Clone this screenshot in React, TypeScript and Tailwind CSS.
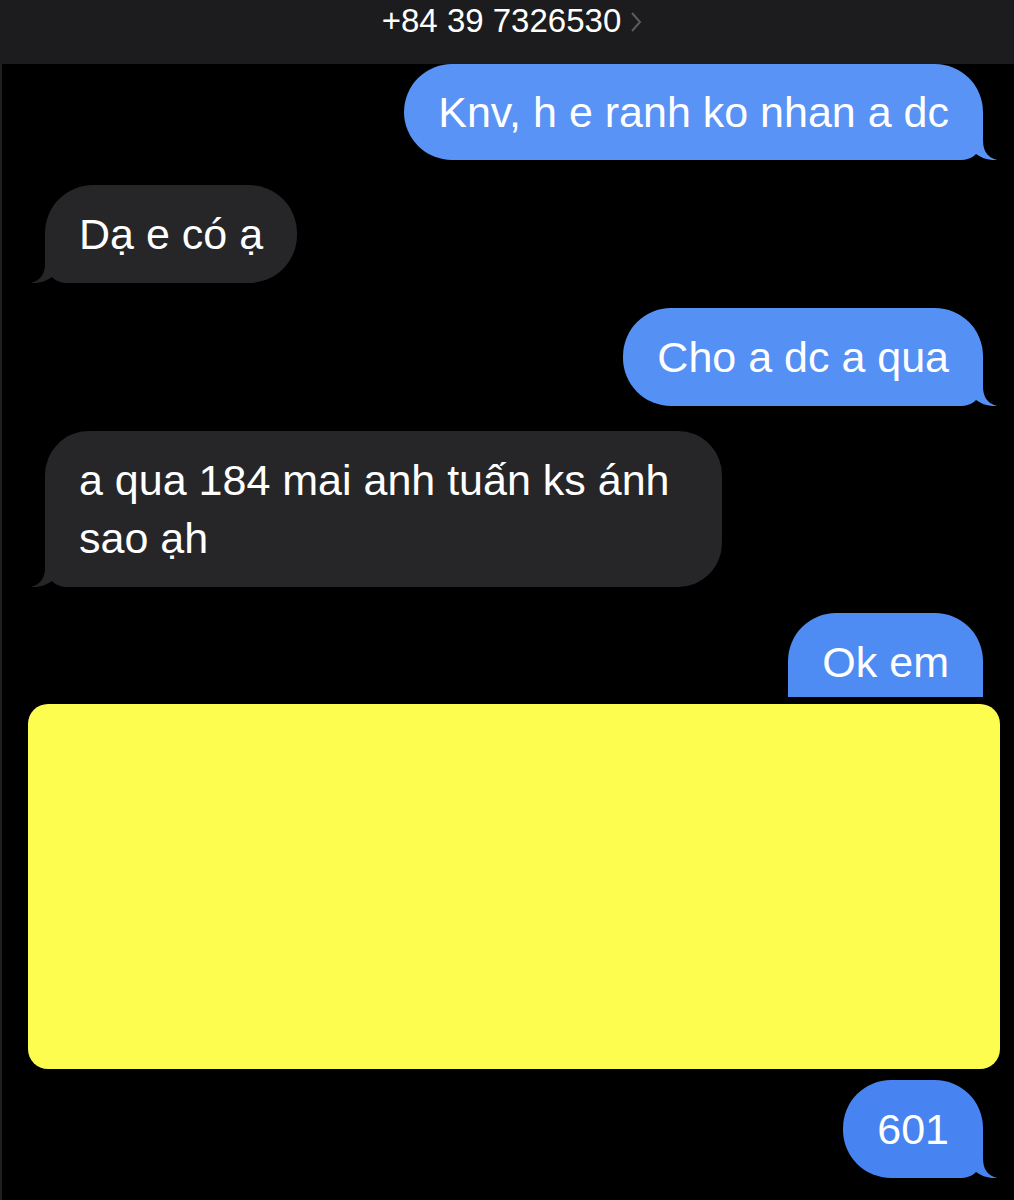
import React from "react";

const FONT = { fontFamily: '"Liberation Sans", Arial, sans-serif' };

function Tail({ color, side }: { color: string; side: "left" | "right" }) {
  return (
    <svg
      width="64"
      height="48"
      viewBox="0 0 64 48"
      className={
        side === "right"
          ? "absolute bottom-0 right-[-16px]"
          : "absolute bottom-0 left-[-16px] -scale-x-100"
      }
    >
      <path
        d="M0 48 L0 0 L48 0 L48 28 C48 39 52 45 62 48 C55 48.6 47 46.5 41 42 C37 46 32 48 24 48 Z"
        fill={color}
      />
    </svg>
  );
}

function Bubble({
  text,
  color,
  side,
  className = "py-[20px] rounded-[48px]",
}: {
  text: React.ReactNode;
  color: string;
  side: "left" | "right";
  className?: string;
}) {
  return (
    <div
      className={`relative px-[34px] text-[43px] leading-[58px] text-white ${className}`}
      style={{ backgroundColor: color }}
    >
      <span className="relative z-10">{text}</span>
      <Tail color={color} side={side} />
    </div>
  );
}

export default function App() {
  return (
    <div className="w-[1014px] h-[1200px] bg-black overflow-hidden flex flex-col" style={FONT}>
      <div className="h-[64px] shrink-0 bg-[#1c1c1e] flex justify-center items-start pt-[1px] pl-[10px]">
        <div className="flex items-center gap-[9px]">
          <span className="text-[33px] leading-[40px] text-white">+84 39 7326530</span>
          <svg width="12" height="22" viewBox="0 0 12 22" className="mt-[2px]">
            <polyline points="2,2 10,11 2,20" fill="none" stroke="#5b5b60" strokeWidth="2" />
          </svg>
        </div>
      </div>
      <div className="flex-1 flex flex-col border-l-2 border-[#1e1f21] pl-[43px] pr-[31px]">
        <div className="flex justify-end">
          <Bubble text="Knv, h e ranh ko nhan a dc" color="#5893f5" side="right" className="py-[19px] rounded-[48px]" />
        </div>
        <div className="flex justify-start mt-[25px]">
          <Bubble text="Dạ e có ạ" color="#262629" side="left" />
        </div>
        <div className="flex justify-end mt-[25px]">
          <Bubble text="Cho a dc a qua" color="#5590f5" side="right" />
        </div>
        <div className="flex justify-start mt-[25px]">
          <Bubble text="a qua 184 mai anh tuấn ks ánh sao ạh" color="#262629" side="left" className="w-[677px] py-[20px] rounded-[44px]" />
        </div>
        <div className="flex justify-end mt-[26px]">
          <div className="h-[84px] rounded-t-[48px] bg-[#4e8bf3] px-[34px] pt-[20px] text-[43px] leading-[58px] text-white">
            Ok em
          </div>
        </div>
        <div className="mt-[7px] ml-[-17px] mr-[-17px] h-[365px] rounded-[20px] bg-[#fdfd4f]" />
        <div className="flex justify-end mt-[11px]">
          <Bubble text="601" color="#4783f1" side="right" />
        </div>
      </div>
    </div>
  );
}
